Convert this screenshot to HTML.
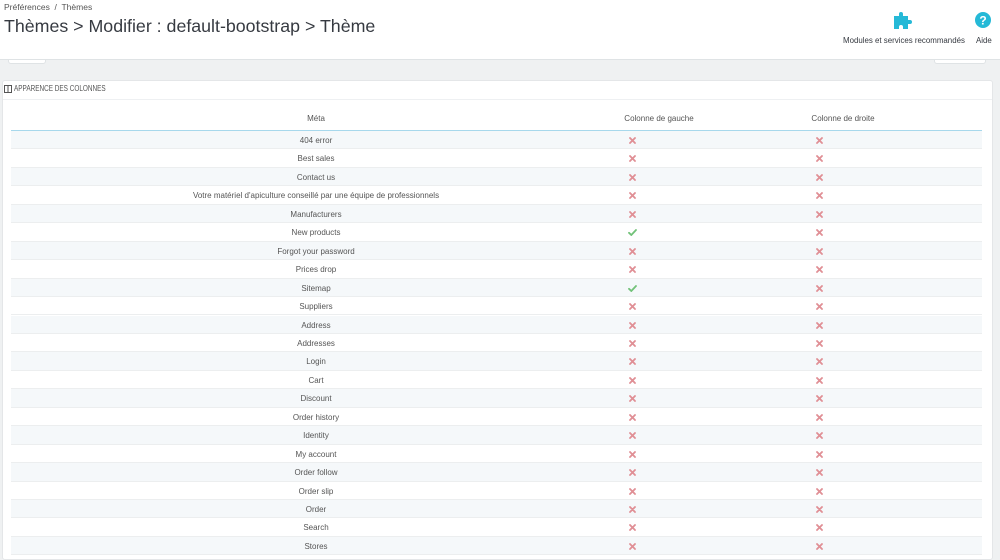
<!DOCTYPE html>
<html><head><meta charset="utf-8"><style>
*{margin:0;padding:0;box-sizing:border-box}
body{width:1000px;height:552px;overflow:hidden;background:#eff1f2;font-family:"Liberation Sans",sans-serif;color:#555;position:relative}
.hdr{position:absolute;left:0;top:0;width:1000px;height:60px;background:#fff;border-bottom:1px solid #dfe3e5}
.bc{position:absolute;left:4px;top:2px;font-size:8.5px;color:#555}
h1{position:absolute;left:4px;top:16px;font-size:17.8px;font-weight:normal;color:#363a41}
.tb{position:absolute;font-size:7.9px;color:#363a41;white-space:nowrap}
.tab{position:absolute;top:60px;height:4px;background:#fff;border:1px solid #dfe3e5;border-top:none;border-radius:0 0 3px 3px}
.panel{position:absolute;left:2px;top:80px;width:991px;height:480px;background:#fff;border:1px solid #e4e6e8;border-radius:3px}
.ph{position:absolute;left:14px;top:84px;font-size:8px;color:#555;white-space:nowrap;transform:scaleX(.8);transform-origin:0 0}
.phl{position:absolute;left:3px;top:99px;width:989px;height:1px;background:#eef0f2}
.th{position:absolute;top:114px;font-size:8px;color:#555;transform:translateX(-50%);white-space:nowrap}
.hl{position:absolute;left:11px;top:130px;width:971px;height:1px;background:#a7d8ec}
.r{position:absolute;left:11px;width:971px;height:18.45px;border-bottom:1px solid #eceeef}
.r.s{background:#f5f8fa}
.r span{position:absolute;top:5px;transform:translateX(-50%);white-space:nowrap;font-size:8px;color:#555}
.r svg{position:absolute;top:6px}
</style></head><body>
<div class="hdr">
<div class="bc">Préférences &nbsp;/&nbsp; Thèmes</div>
<h1>Thèmes &gt; Modifier : default-bootstrap &gt; Thème</h1>
<svg style="position:absolute;left:893px;top:11px" width="20" height="18" viewBox="0 0 20 18"><path fill="#25b9d7" d="M1 5h5V3a2 2 0 1 1 4 0v2h5v4h2a2 2 0 1 1 0 4h-2v5h-5v-2a2 2 0 1 0-4 0v2H1z"/></svg>
<div class="tb" style="left:843px;top:36px">Modules et services recommandés</div>
<svg style="position:absolute;left:975px;top:12px" width="16" height="16" viewBox="0 0 16 16"><circle cx="8" cy="8" r="8" fill="#25b9d7"/><text x="8" y="12.5" font-size="12" font-weight="bold" fill="#fff" text-anchor="middle" font-family="Liberation Sans">?</text></svg>
<div class="tb" style="left:976px;top:36px">Aide</div>
</div>
<div class="tab" style="left:8px;width:38px"></div>
<div class="tab" style="left:934px;width:52px"></div>
<div class="panel"></div>
<svg style="position:absolute;left:4px;top:85px" width="8" height="8" viewBox="0 0 8 8"><rect x=".5" y=".5" width="7" height="7" fill="none" stroke="#555"/><line x1="4" y1="0" x2="4" y2="8" stroke="#555"/></svg>
<div class="ph">APPARENCE DES COLONNES</div>
<div class="phl"></div>
<div class="th" style="left:316px">Méta</div>
<div class="th" style="left:659px">Colonne de gauche</div>
<div class="th" style="left:843px">Colonne de droite</div>
<div class="hl"></div>
<div id="rows"></div>
<script>
var n=["404 error","Best sales","Contact us","Votre matériel d'apiculture conseillé par une équipe de professionnels","Manufacturers","New products","Forgot your password","Prices drop","Sitemap","Suppliers","Address","Addresses","Login","Cart","Discount","Order history","Identity","My account","Order follow","Order slip","Order","Search","Stores"];
var X='<svg width="7" height="7" viewBox="0 0 7 7" style="left:LEFTpx"><path d="M1 1L6 6M6 1L1 6" stroke="#e08f95" stroke-width="1.8" stroke-linecap="round"/></svg>';
var C='<svg width="9" height="7" viewBox="0 0 9 7" style="left:617px"><path d="M1 3.8L3.3 6 8 1" fill="none" stroke="#72c279" stroke-width="1.8" stroke-linecap="round"/></svg>';
var h="";for(var i=0;i<n.length;i++){var t=131+i*18.45;var ok=(i==5||i==8);
h+='<div class="r'+(i%2==0?' s':'')+'" style="top:'+t+'px"><span style="left:305px">'+n[i]+'</span>'+(ok?C:X.replace('LEFT',618))+X.replace('LEFT',805)+'</div>';}
document.getElementById('rows').innerHTML=h;
</script>
</body></html>
